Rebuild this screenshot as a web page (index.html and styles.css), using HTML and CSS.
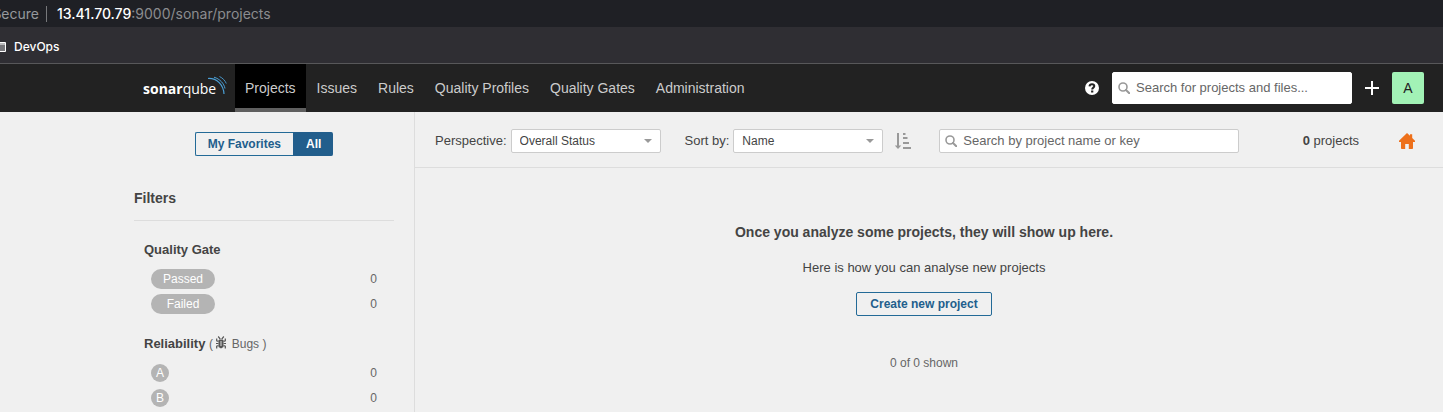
FILE: index.html
```html
<!DOCTYPE html>
<html lang="en">
<head>
<meta charset="utf-8">
<title>Projects</title>
<link rel="stylesheet" href="styles.css">
</head>
<body>
<div class="address-bar">
  <span class="security">Secure</span>
  <span class="url"><b class="host">13.41.70.79</b>:9000/sonar/projects</span>
</div>
<div class="bookmarks">
  <svg class="bookmark-icon" width="6" height="12" viewBox="0 0 6 12" aria-hidden="true"><path d="M0 1.5h5.5v9H0" fill="#77777b" stroke="#fff"/><path d="M0 3h5.5" stroke="#fff"/></svg>
  <a class="bookmark" href="#">DevOps</a>
</div>
<header class="navbar">
  <a class="logo" href="#" aria-label="sonarqube home">
    <svg width="84" height="24" viewBox="0 0 84 24">
      <text x="0" y="19" class="logo-text"><tspan class="logo-bold">sonar</tspan><tspan>qube</tspan></text>
      <g fill="none" stroke="#4b9fd5">
        <path d="M65 3.500C74 3 80.500 10 81 19" stroke-width="1.200"/>
        <path d="M71 2.200C77 4 81 8.500 82 13.500"/>
        <path d="M76.500 1.500C80 3.300 82 5.500 83.300 8.500" stroke-width=".9"/>
      </g>
    </svg>
  </a>
  <nav class="menu">
    <a class="menu-item active" href="#">Projects</a>
    <a class="menu-item" href="#">Issues</a>
    <a class="menu-item" href="#">Rules</a>
    <a class="menu-item" href="#">Quality Profiles</a>
    <a class="menu-item" href="#">Quality Gates</a>
    <a class="menu-item" href="#">Administration</a>
  </nav>
  <div class="tools">
    <button class="icon-button help" aria-label="Help"><svg width="14" height="14" viewBox="0 0 14 14"><circle cx="7" cy="7" r="7" fill="#fff"/><path d="M4.500 5.400C4.600 3.900 5.700 3.200 7 3.200c1.300 0 2.300.7 2.300 1.900C9.300 6.700 7.200 6.600 7.200 8.600" fill="none" stroke="#222" stroke-width="2"/><rect x="6.100" y="9.500" width="2.200" height="2" fill="#222"/></svg></button>
    <label class="search search-global">
      <svg width="12" height="12" viewBox="0 0 12 12" aria-hidden="true"><circle cx="5" cy="5" r="4" fill="none" stroke="#999" stroke-width="1.600"/><path d="M8 8l3.300 3.300" stroke="#999" stroke-width="2" stroke-linecap="round"/></svg>
      <input type="text" placeholder="Search for projects and files..." aria-label="Search for projects and files">
    </label>
    <button class="icon-button plus" aria-label="Create"><svg width="14" height="14" viewBox="0 0 14 14"><path d="M7 0v14M0 7h14" stroke="#fff" stroke-width="2"/></svg></button>
    <button class="avatar" aria-label="Account">A</button>
  </div>
</header>
<div class="page">
  <aside class="sidebar">
    <div class="toggle">
      <button class="toggle-option">My Favorites</button><button class="toggle-option selected">All</button>
    </div>
    <h2 class="filters-title">Filters</h2>
    <section class="facet">
      <h3 class="facet-title">Quality Gate</h3>
      <button class="facet-row"><span class="pill">Passed</span><span>0</span></button>
      <button class="facet-row"><span class="pill">Failed</span><span>0</span></button>
    </section>
    <section class="facet">
      <h3 class="facet-title">Reliability <span class="facet-note">( <svg width="10" height="13" viewBox="0 0 10 13" aria-hidden="true"><path d="M2.500 4h5v7L5 12.500 2.500 11z" fill="#555"/><path d="M2.200.5l1.500 1.800M7.800.5L6.300 2.300M3 3h4M2.500 5.500L.7 4.800V2.500M7.500 5.500l1.800-.7V2.500M2.500 7.500H0M7.500 7.500H10M2.500 9.500l-1.800.6v2.400M7.500 9.500l1.800.6v2.400" fill="none" stroke="#555" stroke-width="1.200"/><path d="M5 5v5" stroke="#ddd"/></svg> Bugs )</span></h3>
      <button class="facet-row"><span class="rating">A</span><span>0</span></button>
      <button class="facet-row"><span class="rating">B</span><span>0</span></button>
    </section>
  </aside>
  <main class="content">
    <div class="toolbar">
      <div class="field">
        <label for="perspective">Perspective:</label>
        <span class="select"><select id="perspective"><option>Overall Status</option></select><svg class="caret" width="8" height="4" viewBox="0 0 8 4" aria-hidden="true"><path d="M0 0h8L4 4z" fill="#999"/></svg></span>
      </div>
      <div class="field">
        <label for="sort">Sort by:</label>
        <span class="select"><select id="sort"><option>Name</option></select><svg class="caret" width="8" height="4" viewBox="0 0 8 4" aria-hidden="true"><path d="M0 0h8L4 4z" fill="#999"/></svg></span>
        <button class="icon-button order" aria-label="Sort order"><svg width="16" height="16" viewBox="0 0 16 16"><path d="M2 0h2v12.500h2.300L3 16 -.3 12.500H2zM8 0h2.500v2H8zM8 4h4.500v2H8zM8 9h6v2H8zM8 14h8v2H8z" fill="#999"/></svg></button>
      </div>
      <label class="search search-projects">
        <svg width="12" height="12" viewBox="0 0 12 12" aria-hidden="true"><circle cx="5" cy="5" r="4" fill="none" stroke="#999" stroke-width="1.600"/><path d="M8 8l3.300 3.300" stroke="#999" stroke-width="2" stroke-linecap="round"/></svg>
        <input type="text" placeholder="Search by project name or key" aria-label="Search by project name or key">
      </label>
      <span class="count"><b>0</b> projects</span>
      <button class="icon-button home" aria-label="Homepage"><svg width="16" height="16" viewBox="0 0 16 16"><path d="M8 0l3 2.800V1.300h2.200v3.600L16 7.800V9h-2v6.200q0 .8-.8.800H9.800v-5H6.200v5H2.800q-.8 0-.8-.8V9H0V7.800z" fill="#ed701b"/></svg></button>
    </div>
    <div class="empty">
      <h1 class="empty-title">Once you analyze some projects, they will show up here.</h1>
      <p class="empty-text">Here is how you can analyse new projects</p>
      <button class="create">Create new project</button>
      <p class="shown">0 of 0 shown</p>
    </div>
  </main>
</div>
</body>
</html>
```
FILE: styles.css
```css
* { box-sizing: border-box; }
body {
  margin: 0;
  min-height: 100vh;
  display: flex;
  flex-direction: column;
  background: #f0f0f0;
  color: #444;
  font: 13px/20px "Liberation Sans", Arial, sans-serif;
}
button, input, select { font: inherit; color: inherit; }
button { padding: 0; border: 0; background: none; cursor: pointer; }
a { color: inherit; text-decoration: none; }
h1, h2, h3, p { margin: 0; }
svg { flex: none; }

.address-bar {
  display: flex;
  align-items: center;
  height: 27px;
  background: #1f2025;
  color: #8b8c8f;
  font: 14px/16px Inter, Roboto, sans-serif;
}
.security {
  display: flex;
  justify-content: flex-end;
  width: 47px;
  padding-right: 7px;
  overflow: hidden;
  border-right: 1px solid #77787b;
  color: #96999d;
}
.url { padding-left: 10px; }
.host { color: #fff; font-weight: 500; }
.bookmarks {
  display: flex;
  align-items: center;
  gap: 8px;
  height: 37px;
  padding-top: 3px;
  border-bottom: 1px solid #58585a;
  background: #2f2e33;
}
.bookmark { color: #fff; font: 500 12px/16px Inter, Roboto, sans-serif; }

.navbar {
  display: flex;
  height: 48px;
  padding: 0 19px 0 143px;
  background: #222;
}
.logo { display: flex; align-items: center; width: 92px; padding-bottom: 2px; }
.logo-text { fill: #fff; font: 400 14px "Open Sans", sans-serif; }
.logo-bold { font-weight: 700; }
.menu { display: flex; gap: 1px; }
.menu-item {
  display: flex;
  align-items: center;
  padding: 3px 10px 0;
  border-bottom: 4px solid transparent;
  color: #ccc;
  font-size: 14px;
}
.menu-item.active { border-color: #5f5f5f; background: #000; }
.tools { display: flex; align-items: center; margin-left: auto; }
.icon-button { display: flex; align-items: center; justify-content: center; }
.plus { margin: 0 13px; }
.help { margin-right: 13px; }
.avatar {
  width: 32px;
  height: 32px;
  border-radius: 2px;
  background: #a2f2b6;
  color: #222;
  font-size: 14px;
}

.search {
  display: flex;
  align-items: center;
  gap: 6px;
  padding: 0 5px;
  border: 1px solid #ccc;
  border-radius: 2px;
  background: #fff;
}
.search input { flex: 1; min-width: 0; padding: 0; border: 0; outline: 0; background: none; }
.search input::placeholder { color: #666; opacity: 1; }
.search-global { width: 240px; height: 32px; border-color: #fff; }
.search-projects { width: 300px; height: 24px; margin-left: 4px; }

.page { display: flex; flex: 1; }
.sidebar {
  flex: none;
  width: 415px;
  padding: 20px 20px 0 134px;
  border-right: 1px solid #ddd;
}
.toggle { display: flex; justify-content: center; font-weight: 700; font-size: 12px; }
.toggle-option {
  height: 24px;
  padding: 0 12px;
  border: 1px solid #236a97;
  border-right: 0;
  border-radius: 2px 0 0 2px;
  color: #225e8c;
}
.toggle-option.selected { border-radius: 0 2px 2px 0; background: #225e8c; border-color: #225e8c; color: #fff; }
.filters-title {
  margin-top: 32px;
  padding-bottom: 12px;
  border-bottom: 1px solid #ddd;
  font-size: 14px;
}
.facet { padding: 19px 10px 0; }
.facet + .facet { padding-top: 15px; }
.facet-title { margin-bottom: 9px; font-size: 13px; line-height: 20px; }
.facet-note { color: #666; font-size: 12px; font-weight: 400; }
.facet-note svg { vertical-align: -1px; margin-right: 2px; }
.facet-row {
  display: flex;
  align-items: center;
  justify-content: space-between;
  width: 100%;
  height: 25px;
  padding: 0 7px 5px;
  color: #666;
  font-size: 12px;
}
.pill {
  min-width: 64px;
  border-radius: 10px;
  background: #b4b4b4;
  color: #fff;
  text-align: center;
}
.rating {
  width: 18px;
  border-radius: 50%;
  background: #b4b4b4;
  color: #fff;
  line-height: 18px;
  text-align: center;
}

.content { flex: 1; min-width: 0; }
.toolbar {
  display: flex;
  align-items: center;
  gap: 24px;
  height: 56px;
  padding: 2px 28px 0 20px;
  border-bottom: 1px solid #ddd;
}
.field { display: flex; align-items: center; gap: 4px; white-space: nowrap; }
.select { display: grid; align-items: center; }
.select > * { grid-area: 1 / 1; }
.select select {
  appearance: none;
  width: 150px;
  height: 24px;
  padding: 0 8px;
  border: 1px solid #ccc;
  border-radius: 2px;
  background: #fff;
  font-size: 12px;
}
.caret { justify-self: end; margin-right: 9px; pointer-events: none; }
.order { margin-left: 8px; }
.count { margin-left: auto; white-space: nowrap; }
.home { margin-left: 16px; }
.empty {
  display: flex;
  flex-direction: column;
  align-items: center;
  padding: 54px 30px 0 20px;
}
.empty-title { font-size: 14px; line-height: 20px; }
.empty-text { margin-top: 16px; }
.create {
  height: 24px;
  margin-top: 14px;
  padding: 0 13px;
  border: 1px solid #236a97;
  border-radius: 2px;
  color: #225e8c;
  font-weight: 700;
  font-size: 12px;
}
.shown { margin-top: 37px; color: #666; font-size: 12px; }
```
